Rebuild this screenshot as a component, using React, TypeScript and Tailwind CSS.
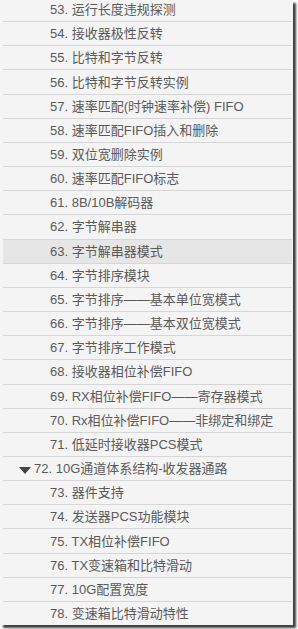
import React from "react";

const items: { n: number; t: string; hl?: boolean; parent?: boolean }[] = [
  { n: 53, t: "运行长度违规探测" },
  { n: 54, t: "接收器极性反转" },
  { n: 55, t: "比特和字节反转" },
  { n: 56, t: "比特和字节反转实例" },
  { n: 57, t: "速率匹配(时钟速率补偿) FIFO" },
  { n: 58, t: "速率匹配FIFO插入和删除" },
  { n: 59, t: "双位宽删除实例" },
  { n: 60, t: "速率匹配FIFO标志" },
  { n: 61, t: "8B/10B解码器" },
  { n: 62, t: "字节解串器" },
  { n: 63, t: "字节解串器模式", hl: true },
  { n: 64, t: "字节排序模块" },
  { n: 65, t: "字节排序——基本单位宽模式" },
  { n: 66, t: "字节排序——基本双位宽模式" },
  { n: 67, t: "字节排序工作模式" },
  { n: 68, t: "接收器相位补偿FIFO" },
  { n: 69, t: "RX相位补偿FIFO——寄存器模式" },
  { n: 70, t: "Rx相位补偿FIFO——非绑定和绑定" },
  { n: 71, t: "低延时接收器PCS模式" },
  { n: 72, t: "10G通道体系结构-收发器通路", parent: true },
  { n: 73, t: "器件支持" },
  { n: 74, t: "发送器PCS功能模块" },
  { n: 75, t: "TX相位补偿FIFO" },
  { n: 76, t: "TX变速箱和比特滑动" },
  { n: 77, t: "10G配置宽度" },
  { n: 78, t: "变速箱比特滑动特性" },
];

export default function App() {
  return (
    <div className="w-[298px] h-[629px] bg-white overflow-hidden">
      <div className="w-[293px] h-[625px] bg-[#f4f4f4] shadow-[3px_3px_2px_rgba(0,0,0,0.75)] overflow-hidden">
        <div className="mt-[-2px] flex flex-col">
          {items.map((it) => (
            <div
              key={it.n}
              className={`ml-[3px] mr-[1px] h-[24.17px] shrink-0 flex items-center border-b border-[#d6d6d6] text-[13px] leading-none text-[#5a5a5a] ${
                it.hl ? "bg-[#e6e6e6]" : ""
              } ${it.parent ? "pl-[16px]" : "pl-[47px]"}`}
              style={{ fontFamily: '"Liberation Sans", "Noto Sans CJK SC", sans-serif' }}
            >
              {it.parent && (
                <svg width="12" height="7" viewBox="0 0 12 7" className="mr-[3px] mt-[3px]">
                  <polygon points="0,0 12,0 6,7" fill="#444" />
                </svg>
              )}
              <span className="whitespace-nowrap">
                {it.n}.{" "}
                <span>{it.t}</span>
              </span>
            </div>
          ))}
        </div>
      </div>
    </div>
  );
}
